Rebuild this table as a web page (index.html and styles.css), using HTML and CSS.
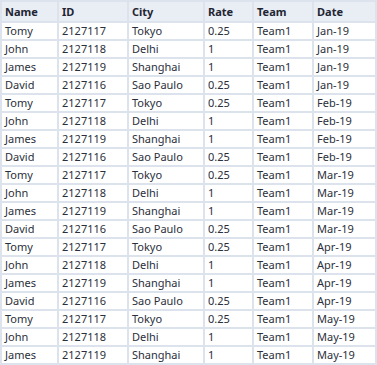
FILE: index.html
```html
<!DOCTYPE html>
<html>
<head>
<meta charset="utf-8">
<link rel="stylesheet" href="styles.css">
</head>
<body>
<table class="grid">
  <colgroup>
    <col class="c-name"><col class="c-id"><col class="c-city"><col class="c-rate"><col class="c-team"><col class="c-date">
  </colgroup>
  <thead>
    <tr><th>Name</th><th>ID</th><th>City</th><th>Rate</th><th>Team</th><th>Date</th></tr>
  </thead>
  <tbody>
    <tr><td>Tomy</td><td>2127117</td><td>Tokyo</td><td>0.25</td><td>Team1</td><td>Jan-19</td></tr>
    <tr><td>John</td><td>2127118</td><td>Delhi</td><td>1</td><td>Team1</td><td>Jan-19</td></tr>
    <tr><td>James</td><td>2127119</td><td>Shanghai</td><td>1</td><td>Team1</td><td>Jan-19</td></tr>
    <tr><td>David</td><td>2127116</td><td>Sao Paulo</td><td>0.25</td><td>Team1</td><td>Jan-19</td></tr>
    <tr><td>Tomy</td><td>2127117</td><td>Tokyo</td><td>0.25</td><td>Team1</td><td>Feb-19</td></tr>
    <tr><td>John</td><td>2127118</td><td>Delhi</td><td>1</td><td>Team1</td><td>Feb-19</td></tr>
    <tr><td>James</td><td>2127119</td><td>Shanghai</td><td>1</td><td>Team1</td><td>Feb-19</td></tr>
    <tr><td>David</td><td>2127116</td><td>Sao Paulo</td><td>0.25</td><td>Team1</td><td>Feb-19</td></tr>
    <tr><td>Tomy</td><td>2127117</td><td>Tokyo</td><td>0.25</td><td>Team1</td><td>Mar-19</td></tr>
    <tr><td>John</td><td>2127118</td><td>Delhi</td><td>1</td><td>Team1</td><td>Mar-19</td></tr>
    <tr><td>James</td><td>2127119</td><td>Shanghai</td><td>1</td><td>Team1</td><td>Mar-19</td></tr>
    <tr><td>David</td><td>2127116</td><td>Sao Paulo</td><td>0.25</td><td>Team1</td><td>Mar-19</td></tr>
    <tr><td>Tomy</td><td>2127117</td><td>Tokyo</td><td>0.25</td><td>Team1</td><td>Apr-19</td></tr>
    <tr><td>John</td><td>2127118</td><td>Delhi</td><td>1</td><td>Team1</td><td>Apr-19</td></tr>
    <tr><td>James</td><td>2127119</td><td>Shanghai</td><td>1</td><td>Team1</td><td>Apr-19</td></tr>
    <tr><td>David</td><td>2127116</td><td>Sao Paulo</td><td>0.25</td><td>Team1</td><td>Apr-19</td></tr>
    <tr><td>Tomy</td><td>2127117</td><td>Tokyo</td><td>0.25</td><td>Team1</td><td>May-19</td></tr>
    <tr><td>John</td><td>2127118</td><td>Delhi</td><td>1</td><td>Team1</td><td>May-19</td></tr>
    <tr><td>James</td><td>2127119</td><td>Shanghai</td><td>1</td><td>Team1</td><td>May-19</td></tr>
  </tbody>
</table>
</body>
</html>
```
FILE: styles.css
```css
html, body {
  margin: 0;
  padding: 0;
  background: #ffffff;
}
.grid {
  width: 377px;
  table-layout: fixed;
  border-collapse: separate;
  border-spacing: 2px;
  background: #dde3ec;
  font-family: "Noto Sans", "DejaVu Sans", sans-serif;
  font-size: 11px;
  color: #2b2f3a;
}
.c-name { width: 55px; }
.c-id { width: 68px; }
.c-city { width: 74px; }
.c-rate { width: 47px; }
.c-team { width: 58px; }
.c-date { width: 61px; }
.grid th,
.grid td {
  padding: 0 0 0 3px;
  text-align: left;
  white-space: nowrap;
  overflow: hidden;
  line-height: 16px;
  height: 16px;
}
.grid th {
  background: #e9edf4;
  font-weight: bold;
  color: #1f2533;
  height: 19px;
  line-height: 19px;
}
.grid td {
  background: #ffffff;
}
```
